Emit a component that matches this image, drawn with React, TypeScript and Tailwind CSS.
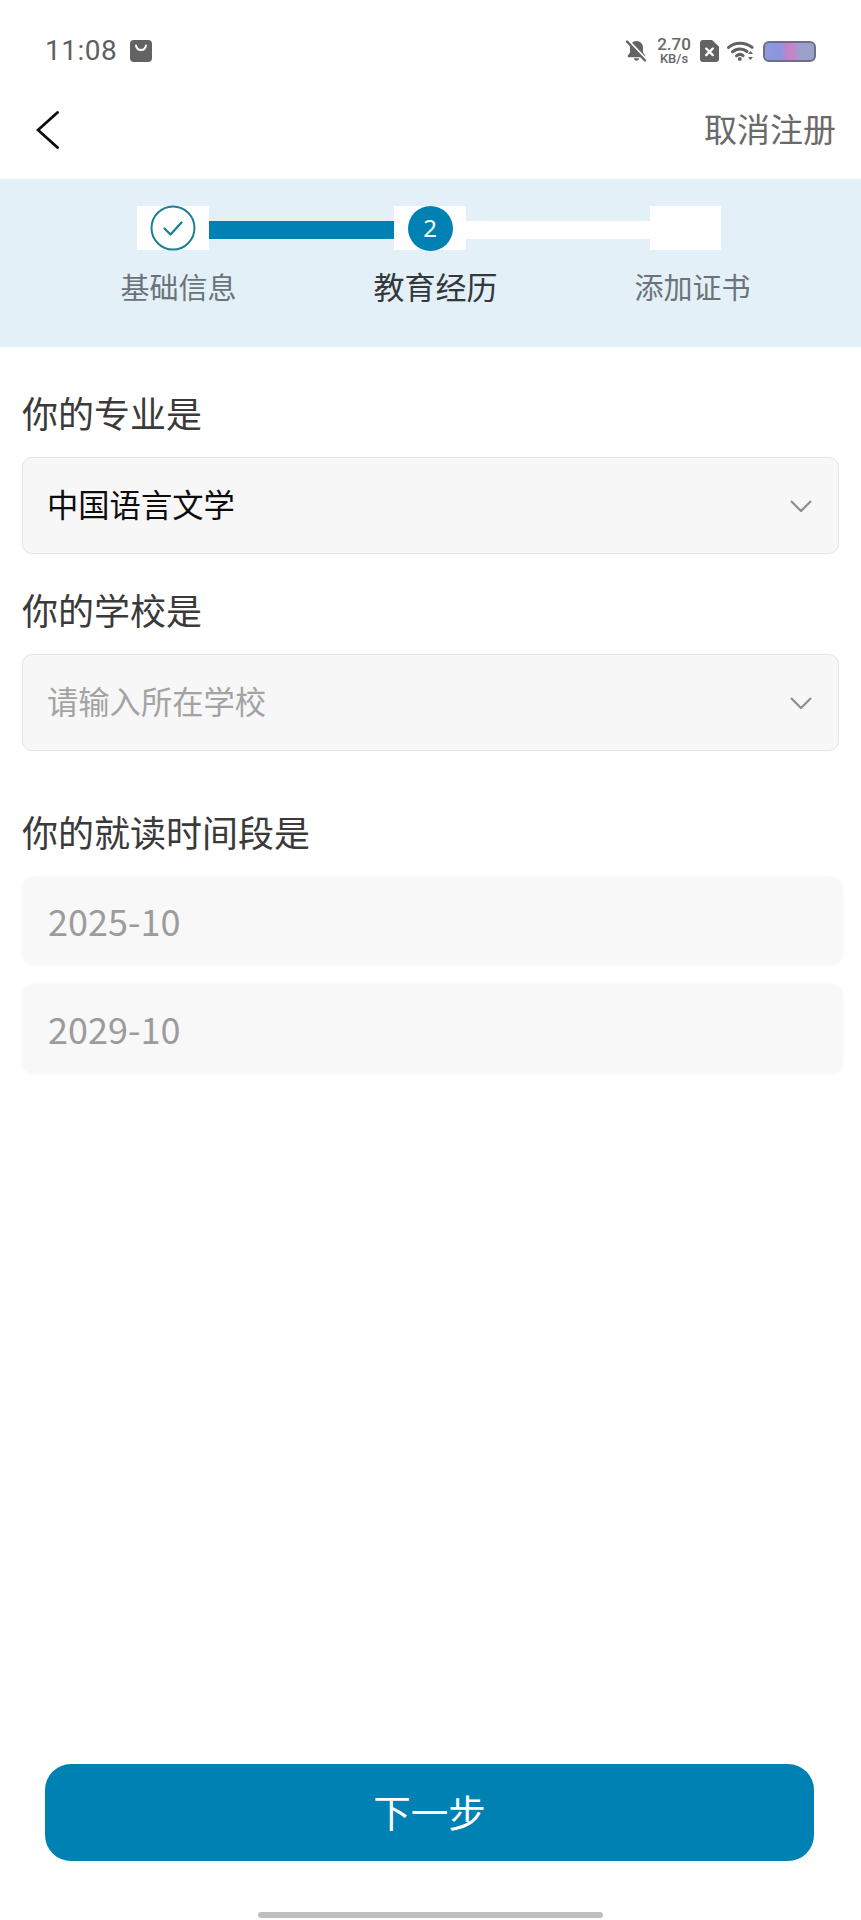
import React from "react";

const BagIcon = () => (
  <svg width="22" height="22" viewBox="0 0 22 22">
    <rect width="22" height="22" rx="4" fill="#636363" />
    <path d="M6 5.500c.6 3 2.400 4.500 5 4.500s4.400-1.500 5-4.500" fill="none" stroke="#fff" strokeWidth="2" strokeLinecap="round" />
  </svg>
);

const BellOffIcon = () => (
  <svg width="21" height="22" viewBox="0 0 21 22">
    <path d="M10.500 1c-3.900 0-6.500 3-6.500 6.700v4.800L1.800 15.600c-.4.700 0 1.600.8 1.600h15.800c.8 0 1.200-.9.800-1.600L17 12.500V7.700C17 4 14.400 1 10.500 1z" fill="#636363" />
    <path d="M7.800 18.200h5.400c-.3 1.500-1.400 2.500-2.700 2.500s-2.400-1-2.700-2.500z" fill="#636363" />
    <path d="M2.500 0.500l18 19" stroke="#fff" strokeWidth="2" />
    <path d="M1 1.500l18 19" stroke="#636363" strokeWidth="2.400" strokeLinecap="round" />
  </svg>
);

const SimIcon = () => (
  <svg width="19" height="22" viewBox="0 0 19 22">
    <path d="M3 0h9l7 6.500V19a3 3 0 0 1-3 3H3a3 3 0 0 1-3-3V3a3 3 0 0 1 3-3z" fill="#636363" />
    <path d="M6.200 8.500l6.600 6.600M12.800 8.500l-6.600 6.600" stroke="#fff" strokeWidth="2.400" strokeLinecap="round" />
  </svg>
);

const WifiIcon = () => (
  <svg width="27" height="20" viewBox="0 0 27 20">
    <g fill="none" stroke="#636363" strokeWidth="3" strokeLinecap="round">
      <path d="M1.500 6.500C7.500 .800 18 .800 25 6.300" />
      <path d="M5.500 10.800c4.200-3.800 10.500-3.800 14.500-.3" />
      <path d="M9.500 14.800c2-1.600 4.800-1.600 6.600-.2" />
    </g>
    <circle cx="12.800" cy="18" r="2" fill="#636363" />
    <path d="M23.500 10l2.500 3h-5zM23.500 19l-2.500-3h5z" fill="#636363" />
  </svg>
);

const Chevron = () => (
  <svg width="22" height="12" viewBox="0 0 22 12" fill="none">
    <path d="M1 1l10 10L21 1" stroke="#8f8f8f" strokeWidth="2.200" />
  </svg>
);

const SelectBox = ({ text, muted }: { text: string; muted?: boolean }) => (
  <div className="mt-[20px] flex h-[97px] w-[817px] items-center justify-between rounded-[10px] border-[1.5px] border-[#e3e3e3] bg-[#f7f7f7] pl-[24px] pr-[26px]">
    <span className={`pb-[3px] text-[31.300px] leading-none ${muted ? "text-[#a3a3a3]" : "text-[#0c0c0c]"}`}>{text}</span>
    <Chevron />
  </div>
);

const DateBox = ({ text, className }: { text: string; className: string }) => (
  <div className={`flex w-[821px] items-center rounded-[12px] bg-[#f8f8f8] pb-[2px] pl-[26px] text-[36px] text-[#9c9c9c] shadow-[0_0_4px_#f8f8f8] ${className}`}>
    {text}
  </div>
);

export default function App() {
  return (
    <div className="flex h-[1920px] w-[861px] flex-col overflow-hidden bg-white font-['Noto_Sans_CJK_SC','Noto_Sans',sans-serif]">
      {/* Status bar */}
      <div className="flex h-[81px] items-start justify-between pl-[45px] pr-[45px] pt-[40px]">
        <div className="flex h-[22px] items-center gap-[13px]">
          <span className="font-['Roboto',sans-serif] text-[28px] leading-none tracking-[0.5px] text-[#5f5f5f]">11:08</span>
          <BagIcon />
        </div>
        <div className="flex h-[22px] items-center">
          <BellOffIcon />
          <div className="ml-[10px] flex w-[34px] flex-col items-center font-['Roboto',sans-serif] font-medium text-[#666666]">
            <span className="text-[17px] leading-[15px]">2.70</span>
            <span className="mt-[1px] text-[13px] leading-[12px]">KB/s</span>
          </div>
          <div className="ml-[9px]">
            <SimIcon />
          </div>
          <div className="ml-[8px]">
            <WifiIcon />
          </div>
          <div className="ml-[9px] h-[21px] w-[53px] rounded-[6px] border-2 border-[#6d6f85] bg-[linear-gradient(90deg,#8f9bdc_0%,#8d93e0_30%,#cf7fc4_52%,#9aa0cc_72%,#9aa2c8_100%)]" />
        </div>
      </div>

      {/* Nav */}
      <div className="flex h-[98px] items-center justify-between pl-[36px] pr-[25px]">
        <svg width="23" height="38" viewBox="0 0 23 38" fill="none">
          <path d="M21.500 1.500L2 19l19.500 17.500" stroke="#0a0a0a" strokeWidth="2.800" strokeLinecap="round" />
        </svg>
        <span className="pb-[3px] text-[33px] leading-none text-[#6a6a6a]">取消注册</span>
      </div>

      {/* Stepper */}
      <div className="h-[168px] bg-[#e3f0f7] pt-[27px]">
        <div className="flex h-[44px] pl-[137px]">
          <div className="flex w-[72px] items-center justify-center bg-white">
            <svg width="46" height="46" viewBox="0 0 46 46" fill="none">
              <circle cx="23" cy="23" r="21.500" stroke="#1c7f93" strokeWidth="2" />
              <path d="M14.500 23.500l6 6 11-12" stroke="#1c7f93" strokeWidth="2.300" strokeLinecap="round" strokeLinejoin="round" />
            </svg>
          </div>
          <div className="mt-[15px] h-[18px] w-[185px] bg-[#0081b3]" />
          <div className="flex w-[72px] items-center justify-center bg-white">
            <div className="flex h-[45px] w-[45px] items-center justify-center rounded-full bg-[#0081b3] font-['Noto_Sans',sans-serif] text-[24px] leading-none text-white">
              2
            </div>
          </div>
          <div className="mt-[15px] h-[18px] w-[184px] bg-white" />
          <div className="w-[71px] bg-white" />
        </div>
        <div className="mt-[12px] flex pl-[50px]">
          <div className="w-[257px] text-center text-[29px] leading-[48px] text-[#6b7379]">基础信息</div>
          <div className="w-[257px] text-center text-[31px] leading-[48px] text-[#33383c]">教育经历</div>
          <div className="w-[257px] text-center text-[29px] leading-[48px] text-[#6b7379]">添加证书</div>
        </div>
      </div>

      {/* Form */}
      <div className="flex flex-col pl-[22px]">
        <div className="mt-[40px] text-[36px] leading-[50px] text-[#3a3a3a]">你的专业是</div>
        <SelectBox text="中国语言文学" />
        <div className="mt-[30px] text-[36px] leading-[50px] text-[#3a3a3a]">你的学校是</div>
        <SelectBox text="请输入所在学校" muted />
        <div className="mt-[55px] text-[36px] leading-[50px] text-[#3a3a3a]">你的就读时间段是</div>
        <DateBox text="2025-10" className="mt-[21px] h-[88px]" />
        <DateBox text="2029-10" className="mt-[19px] h-[90px]" />
      </div>

      {/* Footer */}
      <button className="ml-[45px] mt-auto flex h-[97px] w-[769px] items-center justify-center rounded-[26px] bg-[#0081b3] pb-[3px] text-[37.500px] leading-none text-white">
        下一步
      </button>
      <div className="mx-auto mb-[2px] mt-[51px] h-[6px] w-[345px] rounded-[3px] bg-[#bfbfbf]" />
    </div>
  );
}
